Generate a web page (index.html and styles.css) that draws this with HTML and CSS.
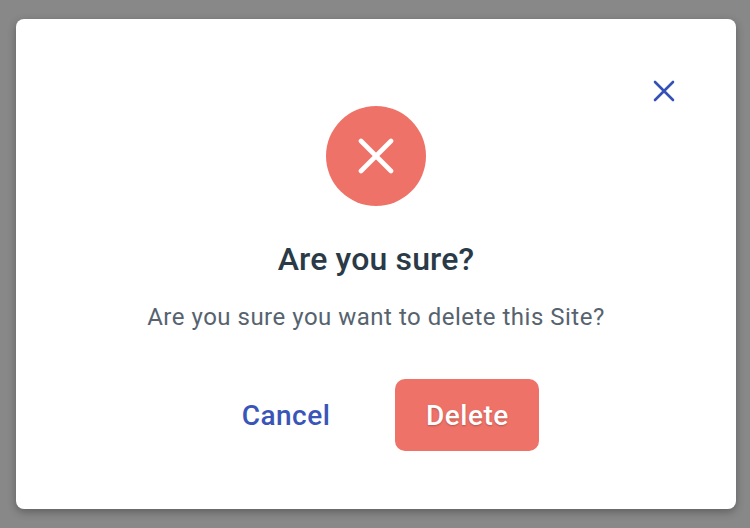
FILE: index.html
```html
<!DOCTYPE html>
<html lang="en">
<head>
<meta charset="utf-8">
<title>Delete Site</title>
<link rel="stylesheet" href="styles.css">
</head>
<body>
<div class="overlay">
  <div class="dialog" role="dialog">
    <button class="close" aria-label="Close">
      <svg width="22" height="22" viewBox="0 0 22 22"><path d="M2 2 L20 20 M20 2 L2 20" fill="none" stroke="#3651b5" stroke-width="2.6" stroke-linecap="round"/></svg>
    </button>
    <div class="badge">
      <svg width="36" height="36" viewBox="0 0 36 36"><path d="M3 3 L33 33 M33 3 L3 33" fill="none" stroke="#fff" stroke-width="4.6" stroke-linecap="round"/></svg>
    </div>
    <h2 class="title">Are you sure?</h2>
    <p class="message">Are you sure you want to delete this Site?</p>
    <div class="actions">
      <button class="btn btn-cancel">Cancel</button>
      <button class="btn btn-delete">Delete</button>
    </div>
  </div>
</div>
</body>
</html>
```
FILE: styles.css
```css
* { box-sizing: border-box; }
html, body { margin: 0; height: 100%; }
body { font-family: Roboto, "Liberation Sans", sans-serif; background: #888888; }
.overlay { height: 528px; padding: 19px 14px 19px 16px; }
.dialog {
  position: relative;
  width: 720px;
  height: 490px;
  background: #fff;
  border-radius: 8px;
  box-shadow: 0 3px 8px rgba(0,0,0,.3);
  padding-top: 87px;
  display: flex;
  flex-direction: column;
  align-items: center;
}
.close {
  position: absolute;
  top: 61px;
  right: 61px;
  width: 22px;
  height: 22px;
  padding: 0;
  border: 0;
  background: none;
  display: flex;
}
.badge {
  width: 100px;
  height: 100px;
  border-radius: 50%;
  background: #ef7268;
  display: flex;
  align-items: center;
  justify-content: center;
}
.title {
  margin: 34px 0 0;
  font-size: 32px;
  line-height: 38px;
  font-weight: 500;
  letter-spacing: .15px;
  color: #2a3a47;
}
.message {
  margin: 21px 0 0;
  font-size: 24px;
  line-height: 36px;
  font-weight: 400;
  letter-spacing: .5px;
  color: #56636f;
}
.actions {
  margin-top: 44px;
  margin-left: 29px;
  display: flex;
  align-items: center;
  gap: 65px;
}
.btn {
  font-family: inherit;
  font-size: 28px;
  font-weight: 500;
  letter-spacing: .5px;
  border: 0;
  background: none;
  padding: 0;
}
.btn-cancel { color: #3a55b8; }
.btn-delete {
  width: 144px;
  height: 72px;
  border-radius: 10px;
  background: #ef7268;
  color: #fff;
  text-shadow: 0 1px 2px rgba(0,0,0,.25);
}
```
